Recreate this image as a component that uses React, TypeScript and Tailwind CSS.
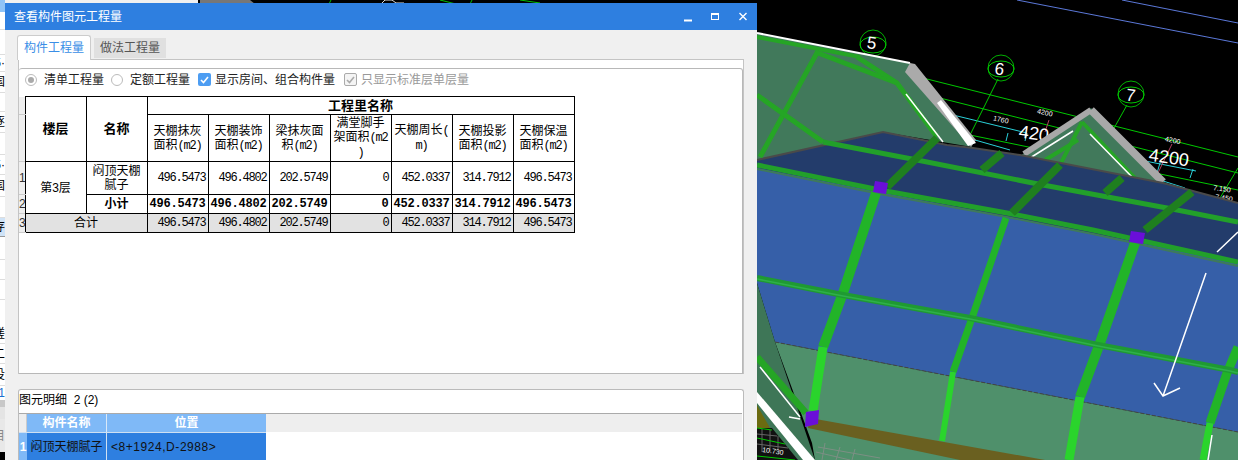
const sans = "font-['Liberation_Sans','Noto_Sans_CJK_SC',sans-serif]";

const stripRows = [
  { h: "h-[12px]", cls: "bg-[#8fc3f7]", text: "" },
  { h: "h-[18px]", cls: "bg-white border-b border-[#ddd]", text: "" },
  { h: "h-[24px]", cls: "bg-white", text: "" },
  { h: "h-[18px]", cls: "bg-white border-y border-[#ddd]", text: "5·" },
  { h: "h-[21px]", cls: "bg-white border-b border-[#ddd]", text: "国" },
  { h: "h-[19px]", cls: "bg-white border-b border-[#ddd]", text: "" },
  { h: "h-[21px]", cls: "bg-white border-b border-[#ddd]", text: "逐" },
  { h: "h-[22px]", cls: "bg-white border-b border-[#ddd]", text: "" },
  { h: "h-[20px]", cls: "bg-white border-b border-[#ddd]", text: "5·" },
  { h: "h-[22px]", cls: "bg-white border-b border-[#ddd]", text: "国" },
  { h: "h-[21px]", cls: "bg-white border-b border-[#ddd]", text: "" },
  { h: "h-[19px]", cls: "bg-[#cfe3f7] border-b border-[#999]", text: "存" },
  { h: "h-[23px]", cls: "bg-white border-b border-[#ddd]", text: "" },
  { h: "h-[20px]", cls: "bg-white border-b border-[#ddd]", text: "" },
  { h: "h-[20px]", cls: "bg-white border-b border-[#ddd]", text: "" },
  { h: "h-[24px]", cls: "bg-white", text: "" },
  { h: "h-[20px]", cls: "bg-white border-b border-[#ddd]", text: "蹉" },
  { h: "h-[20px]", cls: "bg-white border-b border-[#ddd]", text: "二" },
  { h: "h-[22px]", cls: "bg-white border-b border-[#ddd]", text: "役" },
  { h: "h-[14px]", cls: "bg-white text-[#1b6fd0]", text: "1" },
  { h: "h-[7px]", cls: "bg-[#c8c8c8]", text: "" },
  { h: "h-[12px]", cls: "bg-[#e4e4e4]", text: "" },
  { h: "h-[33px]", cls: "bg-[#e8e8e8] text-[#888]", text: "目" },
];

const LeftStrip = () => (
  <div className={`w-[5px] h-[460px] shrink-0 overflow-hidden text-[12px] text-black ${sans}`}>
    {stripRows.map((row, i) => (
      <div key={i} className={`${row.h} ${row.cls} flex items-center justify-end overflow-hidden whitespace-nowrap`}>
        {row.text}
      </div>
    ))}
  </div>
);

const Scene = () => (
  <svg viewBox="5 0 1233 460" className="flex-1 h-[460px] block">
    <rect x="5" y="0" width="1233" height="460" fill="#000" />
    <rect x="5" y="0" width="193" height="4" fill="#f0f0f0" />
    <polygon points="200,0 250,0 255,4 200,4" fill="#777" />
    <g stroke="#00c000" fill="none">
      <path d="M329 4 L331 0 M440 0 L456 4 M470 4 L472 0 M520 0 L540 3" />
    </g>
    <path d="M381 4 L385 0 H392 L396 3 H404" stroke="#ddd" fill="none" />

    {/* grid lines */}
    <g fill="none">
      <path d="M1017 0 L1238 43 M1122 0 L1238 23" stroke="#5b78d8" />
      <path d="M923 78 L1238 157 M940 98 L1238 173 M970 135 L1238 190" stroke="#00c800" />
      <path d="M953 115 L1027 133 M975 140 L1010 150 M1140 160 L1196 171 M1160 180 L1185 188" stroke="#2ad0d8" />
      <path d="M1008 133 L1006 141 M1027 133 L1025 141 M1160 163 L1157 173 M1193 169 L1190 178" stroke="#2ad0d8" />
      <path d="M1049 120 L1045 132 M1172 144 L1157 175" stroke="#b04060" />
      <path d="M998 79 L970 135 M1127 105 L1113 130 M1238 168 L1220 198" stroke="#00c800" />
      <circle cx="873" cy="43" r="13" stroke="#00b000" />
      <ellipse cx="873" cy="45" rx="13" ry="8" stroke="#00c800" />
      <circle cx="1001" cy="68" r="13" stroke="#00b000" />
      <ellipse cx="1001" cy="69" rx="13" ry="8" stroke="#00c800" />
      <circle cx="1131" cy="94" r="13" stroke="#00b000" />
      <ellipse cx="1131" cy="95" rx="13" ry="8" stroke="#00c800" />
    </g>
    <g fill="#fff" className="font-['Liberation_Sans',sans-serif]">
      <text x="867" y="49" fontSize="17" transform="rotate(8 873 43)">5</text>
      <text x="995" y="75" fontSize="17" transform="rotate(8 1001 68)">6</text>
      <text x="1126" y="101" fontSize="17" transform="rotate(8 1131 95)">7</text>
      <text x="993" y="122" fontSize="7" transform="rotate(13 1001 120)">1760</text>
      <text x="1037" y="115" fontSize="7" transform="rotate(13 1045 113)">4200</text>
      <text x="1165" y="141" fontSize="7" transform="rotate(13 1165 139)">4200</text>
      <text x="1019" y="139" fontSize="18" transform="rotate(8 1030 133)">420</text>
      <text x="1149" y="163" fontSize="18" transform="rotate(8 1165 157)">4200</text>
      <text x="1213" y="190" fontSize="7" transform="rotate(8 1213 190)">7.150</text>
      <text x="1215" y="199" fontSize="7" transform="rotate(8 1215 199)">7.450</text>
    </g>

    {/* gable left */}
    <polygon points="757,33 910,63 972,147 883,132 757,165" fill="#41795b" />
    <path d="M757 37 L860 57" stroke="#25a525" strokeWidth="4" fill="none" />
    <path d="M757 33 L910 63" stroke="#fff" strokeWidth="2" fill="none" />
    <g stroke="#25a525" fill="none" strokeWidth="5">
      <path d="M818 51 L760 157" />
      <path d="M757 95 L823 142" />
      <path d="M818 53 L897 83 L937 137" />
      <path d="M857 57 L897 83" />
    </g>
    <path d="M906 94 L943 142" stroke="#fff" strokeWidth="1.5" fill="none" />
    <polygon points="910,63 915,64 976,140 971,147 905,72" fill="#aaa" />
    <polygon points="937,103 941,100 976,143 968,146" fill="#fff" />

    {/* right gable */}
    <polygon points="1091,108 1165,183 1020,156" fill="#41795b" />
    <g stroke="#25a525" fill="none" strokeWidth="4">
      <path d="M1082 122 L1060 165" />
      <path d="M1082 122 L1135 178" />
      <path d="M1078 140 L1045 160" />
    </g>
    <path d="M1091 110 L1024 154" stroke="#a8a8a8" strokeWidth="6" fill="none" />
    <path d="M1091 110 L1163 182" stroke="#a8a8a8" strokeWidth="8" fill="none" />
    <path d="M1073 131 L1030 158 M1090 134 L1133 178" stroke="#fff" strokeWidth="1.5" fill="none" />

    {/* roof dark band */}
    <polygon points="757,160 883,132 947,145 973,148 1020,155 1163,183 1238,203 1238,270 757,170" fill="#233c6b" />
    <path d="M757 160 L883 132 L947 145 L973 148 L1020 155 L1163 183 L1238 203" stroke="#4a4a4a" strokeWidth="2" fill="none" />

    {/* blue plane */}
    <polygon points="757,168 1238,262 1238,432 775,342 757,283" fill="#365fa8" />

    {/* green lower plane and left side */}
    <polygon points="775,342 1238,432 1238,460 815,460 812,443" fill="#4f906b" />
    <polygon points="757,283 775,342 815,460 757,460" fill="#3e7657" />
    <path d="M775 342 L1238 432" stroke="#444" strokeDasharray="4 2" fill="none" />
    <polygon points="810,418 1045,460 960,460 808,428" fill="#6a6020" />
    <path d="M818 447 L880 458 M816 452 L850 460 M825 443 L822 460 M840 447 L836 460 M855 449 L852 460" stroke="#7c8f84" fill="none" />
    <path d="M757 357 L806 413" stroke="#25a525" strokeWidth="7" fill="none" />
    <path d="M760 367 L800 417 M789 417 L800 419" stroke="#fff" strokeWidth="1.5" fill="none" />

    {/* bottom left corner */}
    <polygon points="757,405 770,428 757,428" fill="#6b6b10" />
    <polygon points="757,392 757,403 803,460 815,460" fill="#fff" />
    <polygon points="757,428 772,428 798,460 757,460" fill="#111" />
    <path d="M762 429 L762 452 M770 430 L770 452 M778 436 L778 450 M757 434 L777 436 M757 444 L788 448" stroke="#666" fill="none" />
    <path d="M757 428 L772 430 M757 438 L785 444 M757 456 L795 460" stroke="#00c800" fill="none" />
    <text x="762" y="452" fontSize="7" fill="#fff" transform="rotate(8 762 452)" className="font-['Liberation_Sans',sans-serif]">10.730</text>

    {/* upper cross beams */}
    <path d="M823 142 L917 160 L1043 185 L1167 208 L1238 222" stroke="#22a02a" strokeWidth="5" fill="none" />
    <path d="M757 165 L880 190 L1007 213 L1093 230 L1238 262" stroke="#22a02a" strokeWidth="5" fill="none" />
    <path d="M757 169 L880 194 L1007 217 L1093 234 L1238 266" stroke="#3f7a5a" strokeWidth="2" fill="none" />
    <g stroke="#1f7f1f" strokeWidth="8" fill="none">
      <path d="M937 138 L887 187" />
      <path d="M1002 153 L982 170" />
      <path d="M1060 165 L1012 213" />
      <path d="M1122 178 L1105 193" />
      <path d="M1192 192 L1145 230" />
    </g>

    {/* ribs */}
    <g fill="none" strokeLinejoin="round">
      <path d="M876 193 L843 293 L823 347" stroke="#22b428" strokeWidth="10" />
      <path d="M823 347 L813 411" stroke="#2ad42c" strokeWidth="9" />
      <path d="M1006 218 L972 318 L953 372" stroke="#22b428" strokeWidth="7" />
      <path d="M953 372 L942 441" stroke="#2ad42c" strokeWidth="6" />
      <path d="M1135 243 L1100 343 L1080 397" stroke="#22b428" strokeWidth="10" />
      <path d="M1080 397 L1069 460" stroke="#2ad42c" strokeWidth="9" />
      <path d="M1238 347 L1227 373 L1210 423" stroke="#22b428" strokeWidth="9" />
      <path d="M1210 423 L1203 460" stroke="#2ad42c" strokeWidth="7" />
    </g>
    <path d="M757 278 L843 295 L970 318 L1098 345 L1230 370 L1238 372" stroke="#1f9a32" strokeWidth="6" fill="none" />
    <path d="M757 279 L843 296 L970 319 L1098 346 L1230 371 L1238 373" stroke="#2fb04a" strokeWidth="1.5" fill="none" />

    {/* purple caps */}
    <polygon points="875,181 888,183 886,194 873,192" fill="#6a0fd8" />
    <polygon points="1131,231 1145,233 1143,244 1129,242" fill="#6a0fd8" />
    <polygon points="806,412 819,410 818,424 805,427" fill="#6a0fd8" />

    {/* arrows */}
    <path d="M1206 273 L1163 396 M1154 383 L1163 396 L1180 388" stroke="#fff" strokeWidth="1.5" fill="none" />
    <path d="M1217 252 L1238 232 M1212 435 L1208 460" stroke="#fff" strokeWidth="1.5" fill="none" />
  </svg>
);

const Unit = ({ children }: { children: React.ReactNode }) => (
  <span className="font-['Liberation_Mono',monospace] text-[12px] tracking-[-1.2px]">{children}</span>
);

const headCols: React.ReactNode[] = [
  <>天棚抹灰<br />面积<Unit>(m2)</Unit></>,
  <>天棚装饰<br />面积<Unit>(m2)</Unit></>,
  <>梁抹灰面<br />积<Unit>(m2)</Unit></>,
  <>满堂脚手<br />架面积<Unit>(m2</Unit><br /><Unit>)</Unit></>,
  <>天棚周长<Unit>(</Unit><br /><Unit>m)</Unit></>,
  <>天棚投影<br />面积<Unit>(m2)</Unit></>,
  <>天棚保温<br />面积<Unit>(m2)</Unit></>,
];

const values = ["496.5473", "496.4802", "202.5749", "0", "452.0337", "314.7912", "496.5473"];

const rowNum = "border-b border-[#ccc] bg-[#efefef] text-[12px] text-[#333] text-left p-0 font-normal overflow-hidden";
const cell = "border border-black p-0 text-[12px] leading-[14px] text-center";
const numCell = "border border-black p-0 pr-[2px] text-right font-['Liberation_Mono',monospace] text-[12px] tracking-[-1.2px]";
const boldCell = "border border-black p-0 pr-[2px] text-right font-['Liberation_Mono',monospace] text-[12px] font-bold tracking-[-0.2px]";

const QuantityTable = () => (
  <table className="table-fixed border-collapse w-[555px] text-black">
    <colgroup>
      <col className="w-[6px]" />
      <col className="w-[61px]" span={9} />
    </colgroup>
    <tbody>
      <tr className="h-[18px]">
        <td className={rowNum} />
        <td rowSpan={2} className={`${cell} font-bold text-[13px]`}>楼层</td>
        <td rowSpan={2} className={`${cell} font-bold text-[13px]`}>名称</td>
        <td colSpan={7} className={`${cell} font-bold text-[13px]`}>工程里名称</td>
      </tr>
      <tr className="h-[47px]">
        <td className={rowNum} />
        {headCols.map((c, i) => (
          <td key={i} className={cell}>{c}</td>
        ))}
      </tr>
      <tr className="h-[33px]">
        <td className={rowNum}>1</td>
        <td rowSpan={2} className={cell}>第3层</td>
        <td className={cell}>闷顶天棚<br />腻子</td>
        {values.map((v, i) => (
          <td key={i} className={numCell}>{v}</td>
        ))}
      </tr>
      <tr className="h-[19px]">
        <td className={rowNum}>2</td>
        <td className={`${cell} font-bold`}>小计</td>
        {values.map((v, i) => (
          <td key={i} className={boldCell}>{v}</td>
        ))}
      </tr>
      <tr className="h-[19px] bg-[#e2e2e2]">
        <td className={rowNum}>3</td>
        <td colSpan={2} className={cell}>合计</td>
        {values.map((v, i) => (
          <td key={i} className={numCell}>{v}</td>
        ))}
      </tr>
    </tbody>
  </table>
);

const Radio = ({ checked }: { checked?: boolean }) => (
  <span className="w-[12px] h-[12px] rounded-full border border-[#bbb] bg-white flex items-center justify-center shrink-0">
    {checked && <span className="w-[6px] h-[6px] rounded-full bg-[#aaa]" />}
  </span>
);

const Check = ({ disabled }: { disabled?: boolean }) => (
  <span className={`w-[13px] h-[13px] rounded-[2px] flex items-center justify-center shrink-0 ${disabled ? "border border-[#aaa] bg-[#f4f4f4]" : "bg-[#4d9df2]"}`}>
    <svg width="9" height="8" viewBox="0 0 9 8" fill="none">
      <path d="M1 4 L3.5 6.5 L8 1" stroke={disabled ? "#aaa" : "#fff"} strokeWidth="1.6" />
    </svg>
  </span>
);

const Options = () => (
  <div className="h-[27px] pb-[6px] flex items-center pl-[6px] text-[12px] text-[#222]">
    <Radio checked />
    <span className="ml-[7px]">清单工程量</span>
    <span className="ml-[7px]"><Radio /></span>
    <span className="ml-[7px]">定额工程量</span>
    <span className="ml-[8px]"><Check /></span>
    <span className="ml-[4px]">显示房间、组合构件量</span>
    <span className="ml-[9px]"><Check disabled /></span>
    <span className="ml-[4px] text-[#999]">只显示标准层单层量</span>
  </div>
);

const DetailGrid = () => (
  <div className="border-t border-[#aaa] grid grid-cols-[8px_80px_159px_1fr] grid-rows-[18px_29px] mr-[1px] text-[12px]">
    <div className="bg-[#eeeeee] border-r border-[#ccc]" />
    <div className="bg-[#7fb9f7] border-r border-[#d8e8f8] text-white font-bold text-center leading-[18px]">构件名称</div>
    <div className="bg-[#7fb9f7] text-white font-bold text-center leading-[18px]">位置</div>
    <div className="bg-[#eeeeee]" />
    <div className="bg-[#7fb9f7] text-white font-bold text-center leading-[29px] overflow-hidden border-t border-[#cfe0f2]">1</div>
    <div className="bg-[#2e7fe0] border-r border-t border-[#cfe0f2] text-[#111] text-center leading-[29px] whitespace-nowrap">闷顶天棚腻子</div>
    <div className="bg-[#2e7fe0] border-t border-[#cfe0f2] text-[#111] pl-[4px] leading-[29px] tracking-[0.55px] whitespace-nowrap">&lt;8+1924,D-2988&gt;</div>
    <div className="bg-white" />
  </div>
);

const WindowDialog = () => (
  <div className={`absolute left-[5px] top-[3px] w-[752px] h-[457px] bg-[#f0f0f0] flex flex-col overflow-hidden ${sans}`}>
    <div className="h-[27px] shrink-0 bg-[#2e7fe0] flex items-center pl-[9px] pr-[6px] text-white text-[12px]">
      <span className="flex-1">查看构件图元工程量</span>
      <svg width="70" height="12" viewBox="0 0 70 12" fill="none" stroke="#fff">
        <path d="M3 9.5 H11" strokeWidth="2" />
        <rect x="30.5" y="2.5" width="7" height="6" strokeWidth="1" />
        <path d="M30.5 3 H37.5" strokeWidth="2" />
        <path d="M58.5 2 L65.5 9 M65.5 2 L58.5 9" strokeWidth="1.4" />
      </svg>
    </div>
    <div className="h-[29px] shrink-0 flex items-end pl-[12px] text-[12px]">
      <div className="w-[74px] h-[25px] bg-white border border-b-0 border-[#ccc] rounded-t-[3px] text-[#3a8ee6] text-center leading-[24px] relative top-[1px]">构件工程量</div>
      <div className="w-[72px] h-[20px] ml-[3px] mb-[1px] bg-[#e0e0e0] text-[#555] text-center leading-[20px]">做法工程量</div>
    </div>
    <div className="ml-[13px] w-[726px] h-[315px] shrink-0 bg-white border-t border-x border-[#c4c4c4] pt-[8px] flex flex-col">
      <div className="flex-1 border-t border-r border-b border-[#b8b8b8] rounded-tr-[3px] rounded-tl-[3px]">
        <Options />
        <QuantityTable />
      </div>
    </div>
    <div className="ml-[13px] w-[726px] mt-[15px] flex-1 bg-white border-t border-x border-[#bbb] rounded-t-[3px] overflow-hidden">
      <div className="h-[23px] pb-[3px] flex items-center text-[12px] text-black whitespace-pre">图元明细  2 (2)</div>
      <DetailGrid />
    </div>
  </div>
);

export default function App() {
  return (
    <div className="relative w-[1238px] h-[460px] flex overflow-hidden bg-black">
      <LeftStrip />
      <Scene />
      <WindowDialog />
    </div>
  );
}
